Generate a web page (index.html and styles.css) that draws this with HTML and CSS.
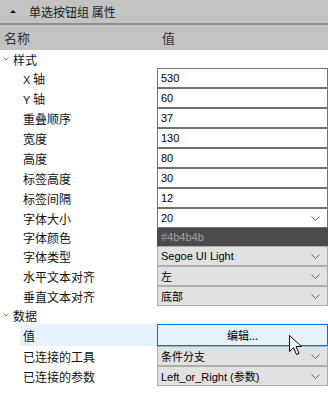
FILE: index.html
```html
<!DOCTYPE html>
<html lang="zh">
<head>
    <meta charset="UTF-8">
    <title>单选按钮组 属性</title>
    <link rel="stylesheet" href="styles.css">
</head>
<body>
    <div class="panel">
        <div class="titlebar">
            <span class="tri"></span>
            <span>单选按钮组 属性</span>
        </div>
        <div class="colhead">
            <span class="col-name">名称</span>
            <span class="col-value">值</span>
        </div>

        <div class="group">
            <span class="caret"><svg width="6" height="4" viewBox="0 0 6 4"><polyline points="0.5,0.5 3,3 5.5,0.5" fill="none" stroke="#777" stroke-width="1"/></svg></span>
            <span>样式</span>
        </div>
        <div class="row"><span class="label"><span class="axis-x">X</span> 轴</span><div class="box">530</div></div>
        <div class="row"><span class="label"><span class="axis-y">Y</span> 轴</span><div class="box">60</div></div>
        <div class="row"><span class="label">重叠顺序</span><div class="box">37</div></div>
        <div class="row"><span class="label">宽度</span><div class="box">130</div></div>
        <div class="row"><span class="label">高度</span><div class="box">80</div></div>
        <div class="row"><span class="label">标签高度</span><div class="box">30</div></div>
        <div class="row"><span class="label">标签间隔</span><div class="box">12</div></div>
        <div class="row"><span class="label">字体大小</span><div class="box select">20<svg class="chev" width="9" height="5" viewBox="0 0 9 5"><polyline points="0.5,0.5 4.5,4.5 8.5,0.5" fill="none" stroke="#666" stroke-width="1"/></svg></div></div>
        <div class="row short"><span class="label">字体颜色</span><div class="swatch">#4b4b4b</div></div>
        <div class="row"><span class="label">字体类型</span><div class="box combo">Segoe UI Light<svg class="chev" width="9" height="5" viewBox="0 0 9 5"><polyline points="0.5,0.5 4.5,4.5 8.5,0.5" fill="none" stroke="#666" stroke-width="1"/></svg></div></div>
        <div class="row"><span class="label">水平文本对齐</span><div class="box combo">左<svg class="chev" width="9" height="5" viewBox="0 0 9 5"><polyline points="0.5,0.5 4.5,4.5 8.5,0.5" fill="none" stroke="#666" stroke-width="1"/></svg></div></div>
        <div class="row"><span class="label">垂直文本对齐</span><div class="box combo">底部<svg class="chev" width="9" height="5" viewBox="0 0 9 5"><polyline points="0.5,0.5 4.5,4.5 8.5,0.5" fill="none" stroke="#666" stroke-width="1"/></svg></div></div>

        <div class="group">
            <span class="caret"><svg width="6" height="4" viewBox="0 0 6 4"><polyline points="0.5,0.5 3,3 5.5,0.5" fill="none" stroke="#777" stroke-width="1"/></svg></span>
            <span>数据</span>
        </div>
        <div class="row tall selected"><span class="label">值</span><div class="editbtn">编辑...</div></div>
        <div class="row"><span class="label">已连接的工具</span><div class="box combo">条件分支<svg class="chev" width="9" height="5" viewBox="0 0 9 5"><polyline points="0.5,0.5 4.5,4.5 8.5,0.5" fill="none" stroke="#666" stroke-width="1"/></svg></div></div>
        <div class="row"><span class="label">已连接的参数</span><div class="box combo">Left_or_Right (参数)<svg class="chev" width="9" height="5" viewBox="0 0 9 5"><polyline points="0.5,0.5 4.5,4.5 8.5,0.5" fill="none" stroke="#666" stroke-width="1"/></svg></div></div>

        <svg class="cursor" width="14" height="21" viewBox="0 0 14 21">
            <path d="M0.5,0.5 L0.5,16.5 L4.5,12.5 L7.5,19.5 L10,18.5 L7,11.5 L12.5,11.5 Z" fill="#fff" stroke="#000" stroke-width="1" stroke-linejoin="miter"/>
        </svg>
    </div>
</body>
</html>
```

FILE: styles.css
```css
* {
    margin: 0;
    padding: 0;
    box-sizing: border-box;
}

body {
    background: #ffffff;
    font-family: 'Noto Sans CJK SC', sans-serif;
    font-size: 12px;
    color: #111;
}

.panel {
    position: relative;
    width: 328px;
    height: 416px;
    background: #ffffff;
}

.titlebar {
    height: 25px;
    background: #c3c3c3;
    border-bottom: 2px solid #8e8e8e;
    display: flex;
    align-items: center;
    padding-left: 10px;
    gap: 13px;
    font-size: 12px;
    color: #1a1a1a;
}

.tri {
    width: 0;
    height: 0;
    border-left: 3px solid transparent;
    border-right: 3px solid transparent;
    border-bottom: 3px solid #111;
}

.colhead {
    height: 25px;
    background: #c3c3c3;
    display: grid;
    grid-template-columns: 157px 1fr;
    align-items: center;
    font-size: 13px;
    color: #333;
}

.col-name {
    padding-left: 4px;
}

.col-value {
    padding-left: 5px;
}

.group {
    height: 18px;
    display: flex;
    align-items: center;
    padding-left: 3px;
    gap: 4px;
    font-size: 12px;
}

.caret {
    display: flex;
    width: 6px;
}

.row {
    height: 20px;
    display: grid;
    grid-template-columns: 157px 171px;
    align-items: center;
}

.row.short {
    height: 18px;
}

.row.tall {
    height: 22px;
}

.row.selected {
    background: linear-gradient(to right, transparent 20px, #e5f3ff 20px);
}

.label {
    padding-left: 23px;
    white-space: nowrap;
}

.axis-x,
.axis-y {
    font-family: 'Liberation Sans', sans-serif;
    font-size: 11px;
}

.box {
    height: 100%;
    border: 1px solid #727272;
    background: #ffffff;
    display: flex;
    align-items: center;
    padding-left: 3px;
    font-family: 'Liberation Sans', 'Noto Sans CJK SC', sans-serif;
    font-size: 11px;
    color: #000;
    position: relative;
}

.box.combo {
    background: #e1e1e1;
    border-color: #adadad;
}

.chev {
    position: absolute;
    right: 7px;
    top: 7px;
}

.swatch {
    height: 100%;
    background: #4b4b4b;
    display: flex;
    align-items: center;
    padding-left: 4px;
    font-family: 'Liberation Sans', sans-serif;
    font-size: 11px;
    color: #a3a3a3;
}

.editbtn {
    height: 100%;
    border: 1px solid #0078d7;
    background: #e5f1fb;
    display: flex;
    align-items: center;
    justify-content: center;
    font-size: 11px;
    color: #000;
}

.cursor {
    position: absolute;
    left: 289px;
    top: 335px;
}
```
